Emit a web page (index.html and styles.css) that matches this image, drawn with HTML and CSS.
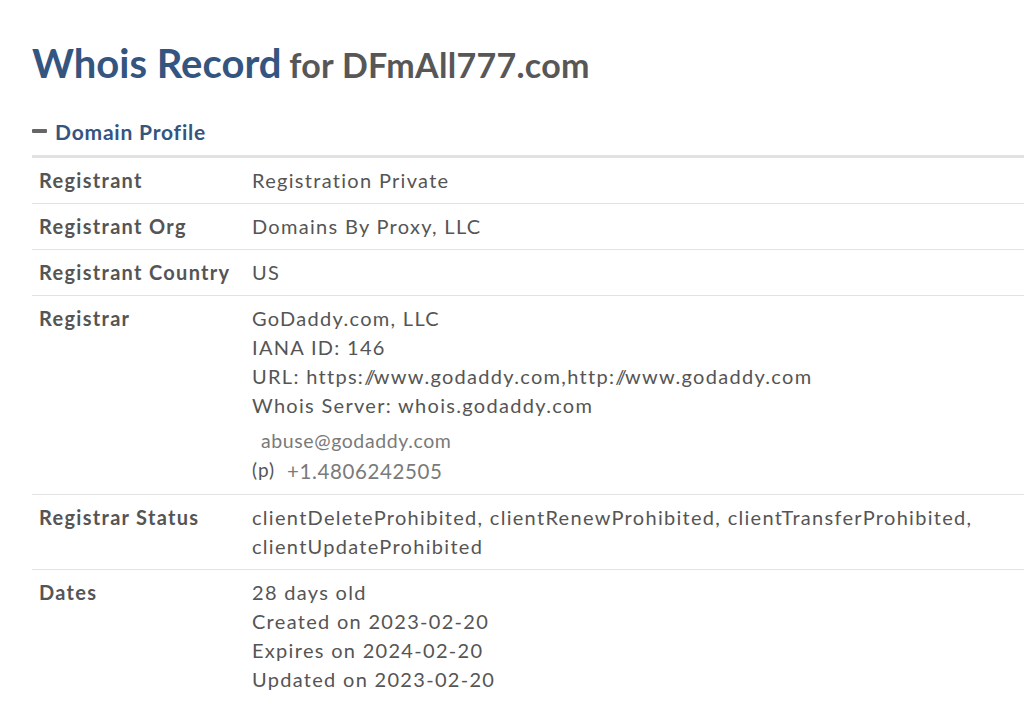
FILE: index.html
```html
<!DOCTYPE html>
<html>
<head>
<meta charset="utf-8">
<link rel="stylesheet" href="styles.css">
</head>
<body>
<div class="page">
  <h1 class="title"><span class="title-main">Whois Record</span> <span class="title-sub">for DFmAll777.com</span></h1>
  <h2 class="section-head"><span class="minus"></span>Domain Profile</h2>
  <table class="profile">
    <tr><td class="lbl">Registrant</td><td class="val">Registration Private</td></tr>
    <tr><td class="lbl">Registrant Org</td><td class="val">Domains By Proxy, LLC</td></tr>
    <tr><td class="lbl">Registrant Country</td><td class="val">US</td></tr>
    <tr><td class="lbl">Registrar</td><td class="val">
      <div class="line">GoDaddy.com, LLC</div>
      <div class="line">IANA ID: 146</div>
      <div class="line">URL: https:<span class="sl">//</span>www.godaddy.com,http:<span class="sl">//</span>www.godaddy.com</div>
      <div class="line">Whois Server: whois.godaddy.com</div>
      <div class="contact email">abuse@godaddy.com</div>
      <div class="contact phone"><span class="p">(p)</span><span class="num">+1.4806242505</span></div>
    </td></tr>
    <tr><td class="lbl">Registrar Status</td><td class="val">clientDeleteProhibited, clientRenewProhibited, clientTransferProhibited, clientUpdateProhibited</td></tr>
    <tr class="last"><td class="lbl">Dates</td><td class="val">
      <div class="line">28 days old</div>
      <div class="line">Created on 2023-02-20</div>
      <div class="line">Expires on 2024-02-20</div>
      <div class="line">Updated on 2023-02-20</div>
    </td></tr>
  </table>
</div>
</body>
</html>
```
FILE: styles.css
```css
html, body {
  margin: 0;
  padding: 0;
  background: #fff;
}
body {
  font-family: Lato, "Open Sans", sans-serif;
  color: #555;
}
.page {
  padding: 43px 0 0 32px;
}
.title {
  margin: 0;
  font-weight: 700;
  line-height: 1;
}
.title-main {
  font-size: 40px;
  color: #34557f;
}
.title-sub {
  font-size: 34px;
  color: #575757;
  letter-spacing: 0.3px;
}
.section-head {
  margin: 35px 0 0;
  font-size: 21px;
  font-weight: 700;
  color: #34557f;
  letter-spacing: 0.8px;
  display: flex;
  align-items: center;
  height: 26px;
}
.minus {
  display: inline-block;
  width: 15px;
  height: 4px;
  background: #666;
  margin-right: 8px;
  border-radius: 1px;
}
.profile {
  margin-top: 11px;
  width: 100%;
  border-collapse: collapse;
  border-top: 3px solid #e2e2e2;
  font-size: 20px;
  letter-spacing: 1.3px;
}
.profile td {
  vertical-align: top;
  padding: 8px 7px 8px;
  border-bottom: 1px solid #e2e2e2;
  line-height: 29px;
}
.profile tr.last td {
  border-bottom: none;
}
.profile td.lbl {
  width: 199px;
  font-weight: 700;
  color: #555;
  white-space: nowrap;
}
.profile td.val {
  color: #555;
}
.sl {
  letter-spacing: -2px;
}
.contact {
  color: #7a7a7a;
  letter-spacing: 0.6px;
}
.email {
  padding-left: 9px;
  margin-top: 6px;
  font-size: 19.5px;
  line-height: 29px;
}
.phone {
  height: 31px;
  line-height: 30px;
}
.phone .p {
  color: #555;
  font-size: 19px;
  letter-spacing: 1px;
  margin-right: 12px;
  vertical-align: 2px;
}
.phone .num {
  font-size: 20.5px;
  letter-spacing: 0.6px;
}
```
